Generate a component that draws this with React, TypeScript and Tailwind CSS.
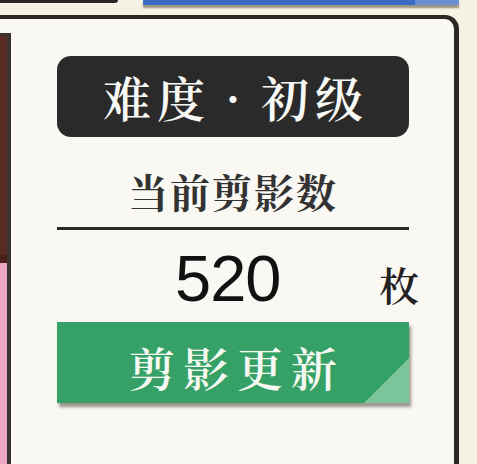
export default function App() {
  const cjk = {
    fontFamily: '"Noto Serif CJK SC", "Noto Sans CJK SC", serif',
  };
  return (
    <div className="w-[477px] h-[464px] overflow-hidden bg-[#f5f1e3]">
      {/* bottoms of the controls above the panel */}
      <div className="h-[15px] flex items-start">
        <div className="w-[118px] h-[3px] bg-[#2b2623] rounded-br-[6px]" />
        <div className="ml-[25px] w-[316px] h-[5px] flex shadow-[0_3px_2px_rgba(80,70,50,0.55)]">
          <div className="flex-1 bg-[#3b6cc4]" />
          <div className="w-[44px] bg-[#6a8fd2]" />
        </div>
      </div>

      {/* main panel */}
      <div className="w-[459px] h-[449px] border-t-[4px] border-r-[5px] border-[#2b2826] rounded-tr-[14px] bg-[#faf8f3] flex">
        <div className="mt-[14px] w-[11px] flex flex-col border-t-[3px] border-r-[4px] border-[#3a3431]">
          <div className="h-[219px] bg-[#5b2b23]" />
          <div className="h-[8px] bg-[#4a1f1b]" />
          <div className="flex-1 bg-[#eba7c2]" />
        </div>

        <div className="flex-1 pl-[46px] pr-[45px] pt-[37px] flex flex-col">
          {/* difficulty badge */}
          <div
            className="h-[81px] rounded-[14px] bg-[#2a2a2a] text-[#f8f8f4] flex items-center justify-center text-[48px] leading-none font-semibold"
            style={cjk}
          >
            <span className="tracking-[6px] mr-[-6px]">难度</span>
            <span className="inline-block w-[56px] text-center">·</span>
            <span className="tracking-[6px] mr-[-6px]">初级</span>
          </div>

          {/* current count */}
          <div
            className="mt-[32px] h-[44px] flex items-center justify-center text-[40px] leading-none font-bold text-[#333] tracking-[2px]"
            style={cjk}
          >
            当前剪影数
          </div>
          <div className="mt-[14px] h-[3px] bg-[#2a2a2a]" />

          <div className="mt-[18px] h-[60px] flex items-center">
            <span
              className="ml-[118px] text-[65px] leading-none text-[#111] tracking-[-1px]"
              style={{ fontFamily: '"Liberation Sans", Arial, sans-serif' }}
            >
              520
            </span>
            <span
              className="ml-auto mr-[-10px] mt-[12px] text-[40px] leading-none text-[#222] font-semibold"
              style={cjk}
            >
              枚
            </span>
          </div>

          {/* refresh button */}
          <button
            className="mt-[14px] relative h-[81px] w-full bg-[#35a166] text-[#f6f8f2] text-[46px] leading-none tracking-[8px] font-semibold flex items-center justify-center overflow-hidden shadow-[2px_4px_3px_rgba(60,50,40,0.5)]"
            style={cjk}
          >
            <span className="mt-[6px] mr-[-8px]">剪影更新</span>
            <svg
              className="absolute right-0 bottom-0"
              width="45"
              height="45"
              viewBox="0 0 45 45"
            >
              <polygon points="45,0 45,45 0,45" fill="#7cc59b" />
            </svg>
          </button>
        </div>
      </div>
    </div>
  );
}
